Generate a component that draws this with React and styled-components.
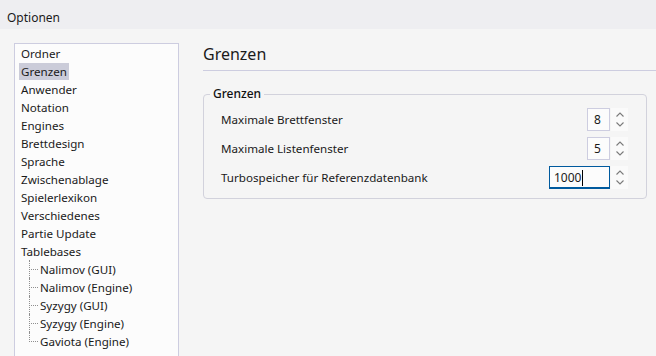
import React from 'react';
import styled, { createGlobalStyle } from 'styled-components';

const GlobalStyle = createGlobalStyle`
  html, body {
    margin: 0;
    padding: 0;
    background: #f5f5f5;
  }
  * {
    box-sizing: border-box;
  }
`;

const Window = styled.div`
  width: 656px;
  height: 356px;
  display: flex;
  flex-direction: column;
  overflow: hidden;
  background: #f5f5f5;
  font-family: "Noto Sans", "Open Sans", sans-serif;
  font-size: 11.6px;
  color: #1a1a1a;
`;

const TitleBar = styled.div`
  height: 29px;
  flex: none;
  display: flex;
  align-items: center;
  padding: 5px 0 0 7px;
  background: #eeeef1;
  font-size: 12px;
  color: #1a1a1a;
`;

const Body = styled.div`
  flex: 1;
  display: flex;
  gap: 24px;
  padding: 14px 0 0 14px;
  min-height: 0;
`;

const TreeBox = styled.div`
  width: 165px;
  flex: none;
  border: 1px solid #cdcde0;
  border-bottom: none;
  background: #fcfcfc;
  padding: 0 0 0 4px;
  display: flex;
  flex-direction: column;
`;

const Item = styled.div`
  height: 18px;
  line-height: 18px;
  display: flex;
  align-items: center;
`;

const Label = styled.span`
  padding: 0 2px;
  line-height: 17px;
  background: ${p => (p.$selected ? '#cbccd9' : 'transparent')};
  white-space: nowrap;
`;

const Children = styled.div`
  display: flex;
  flex-direction: column;
`;

const ChildItem = styled(Item)`
  position: relative;
  padding-left: 19px;

  &::before {
    content: '';
    position: absolute;
    left: 10px;
    top: 9px;
    width: 9px;
    border-top: 1px dotted #8f8f8f;
  }

  &::after {
    content: '';
    position: absolute;
    left: 10px;
    top: 0;
    height: ${p => (p.$last ? '10px' : '18px')};
    border-left: 1px dotted #8f8f8f;
  }
`;

const Panel = styled.div`
  flex: 1;
  display: flex;
  flex-direction: column;
  min-width: 0;
`;

const PanelTitle = styled.div`
  font-size: 16px;
  line-height: 22px;
  padding-bottom: 5px;
  border-bottom: 1px solid #cdcde0;
  color: #1a1a1a;
`;

const GroupBox = styled.fieldset`
  margin: 15px 9px 0 0;
  padding: 3px 18px 6px 17px;
  border: 1px solid #d2d2dc;
  border-radius: 4px;
  display: flex;
  flex-direction: column;
`;

const Legend = styled.legend`
  padding: 0 3px;
  margin-left: -11px;
  font-weight: 500;
  font-size: 12px;
  line-height: 16px;
  color: #111;
`;

const Row = styled.div`
  height: 29px;
  display: flex;
  align-items: center;
  justify-content: space-between;
`;

const Spin = styled.div`
  display: flex;
  align-items: center;
  gap: 1px;
`;

const Field = styled.div`
  width: ${p => p.$width}px;
  height: 23px;
  display: flex;
  align-items: center;
  padding-left: ${p => (p.$focused ? 4 : 6)}px;
  background: #fcfcfc;
  border: ${p => (p.$focused ? '1px solid #005a9e' : '1px solid #cdcde0')};
  box-shadow: ${p => (p.$focused ? 'inset 0 -1px 0 #005a9e' : 'none')};
  font-size: 12px;
  color: #1a1a1a;
`;

const Caret = styled.span`
  display: inline-block;
  width: 1px;
  height: 16px;
  background: #000;
  margin-left: 1px;
`;

const Arrows = styled.div`
  width: 17px;
  height: 23px;
  background: #fafafa;
  display: flex;
  flex-direction: column;
  align-items: center;
  justify-content: center;
  gap: 5px;
`;

const Chevron = ({ up }) => (
  <svg width="8" height="5" viewBox="0 0 8 5">
    <path
      d={up ? 'M0.5 4.5 L4 1 L7.5 4.5' : 'M0.5 0.5 L4 4 L7.5 0.5'}
      fill="none"
      stroke="#7a7a7a"
      strokeWidth="1.1"
    />
  </svg>
);

const SpinBox = ({ value, width = 23, focused }) => (
  <Spin>
    <Field $width={width} $focused={focused}>
      {value}
      {focused && <Caret />}
    </Field>
    <Arrows>
      <Chevron up />
      <Chevron />
    </Arrows>
  </Spin>
);

const topItems = [
  'Ordner',
  'Grenzen',
  'Anwender',
  'Notation',
  'Engines',
  'Brettdesign',
  'Sprache',
  'Zwischenablage',
  'Spielerlexikon',
  'Verschiedenes',
  'Partie Update',
  'Tablebases',
];

const tablebases = [
  'Nalimov (GUI)',
  'Nalimov (Engine)',
  'Syzygy (GUI)',
  'Syzygy (Engine)',
  'Gaviota (Engine)',
];

export default function App() {
  return (
    <>
      <GlobalStyle />
      <Window>
        <TitleBar>Optionen</TitleBar>
        <Body>
          <TreeBox>
            {topItems.map(name => (
              <Item key={name}>
                <Label $selected={name === 'Grenzen'}>{name}</Label>
              </Item>
            ))}
            <Children>
              {tablebases.map((name, i) => (
                <ChildItem key={name} $last={i === tablebases.length - 1}>
                  <Label>{name}</Label>
                </ChildItem>
              ))}
            </Children>
          </TreeBox>
          <Panel>
            <PanelTitle>Grenzen</PanelTitle>
            <GroupBox>
              <Legend>Grenzen</Legend>
              <Row>
                <span>Maximale Brettfenster</span>
                <SpinBox value="8" />
              </Row>
              <Row>
                <span>Maximale Listenfenster</span>
                <SpinBox value="5" />
              </Row>
              <Row>
                <span>Turbospeicher für Referenzdatenbank</span>
                <SpinBox value="1000" width={61} focused />
              </Row>
            </GroupBox>
          </Panel>
        </Body>
      </Window>
    </>
  );
}
